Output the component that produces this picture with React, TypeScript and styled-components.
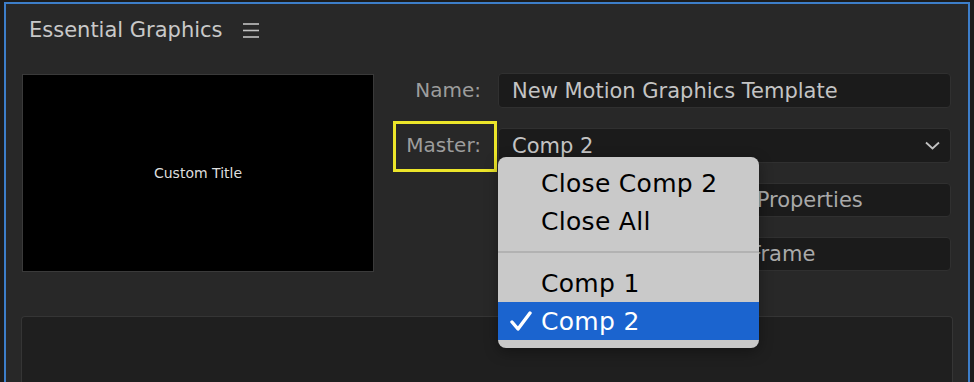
import React from 'react';
import styled, { createGlobalStyle } from 'styled-components';

const GlobalStyle = createGlobalStyle`
  html, body {
    margin: 0;
    padding: 0;
    background: #1c1c1c;
  }
  body {
    font-family: "DejaVu Sans", "Noto Sans", sans-serif;
  }
`;

const Frame = styled.div`
  width: 974px;
  height: 382px;
  box-sizing: border-box;
  padding: 2px 4px 0 4px;
  background: #1c1c1c;
  overflow: hidden;
  display: flex;
`;

const Panel = styled.div`
  flex: 1;
  display: flex;
  flex-direction: column;
  background: #282828;
  border: 2px solid #3d7ec9;
  border-bottom: none;
`;

const Header = styled.div`
  display: flex;
  align-items: center;
  gap: 20px;
  height: 26px;
  margin-top: 13px;
  padding-left: 23px;
`;

const Title = styled.span`
  font-size: 21px;
  line-height: 26px;
  color: #c9c9c9;
`;

const Body = styled.div`
  display: flex;
  align-items: flex-start;
  margin-top: 30px;
  padding: 0 17px 0 16px;
`;

const Preview = styled.div`
  width: 352px;
  height: 198px;
  box-sizing: border-box;
  margin-top: 1px;
  background: #000;
  border: 1px solid #3a3a3a;
  display: flex;
  align-items: center;
  justify-content: center;
  font-size: 14px;
  color: #dedede;
`;

const Form = styled.div`
  flex: 1;
  display: grid;
  grid-template-columns: 1fr 453px;
  column-gap: 17px;
  row-gap: 20px;
`;

const Label = styled.div`
  grid-column: 1;
  text-align: right;
  font-size: 20px;
  line-height: 35px;
  color: #9d9d9d;
`;

const Marked = styled.span`
  position: relative;
  display: inline-block;
  line-height: 35px;

  &::after {
    content: '';
    position: absolute;
    top: -7px;
    bottom: -9px;
    left: -13px;
    right: -16px;
    border: 3px solid #ece52a;
  }
`;

const Box = styled.div<{ $center?: boolean; $height?: number }>`
  grid-column: 2;
  position: relative;
  height: ${({ $height }) => $height ?? 35}px;
  box-sizing: border-box;
  display: flex;
  align-items: center;
  justify-content: ${({ $center }) => ($center ? 'center' : 'space-between')};
  padding: 0 10px 0 13px;
  background: #1b1b1b;
  border: 1px solid #303030;
  border-radius: 4px;
  font-size: 21px;
  color: ${({ $center }) => ($center ? '#a9a9a9' : '#c4c4c4')};
  white-space: nowrap;
`;

const Menu = styled.div`
  position: absolute;
  top: 28px;
  left: -1px;
  width: 261px;
  box-sizing: border-box;
  padding: 7px 0 8px;
  background: #c9c9c9;
  border-radius: 8px;
  box-shadow: 0 4px 14px rgba(0, 0, 0, 0.35);
  z-index: 10;
  overflow: hidden;
`;

const Item = styled.div<{ $active?: boolean }>`
  height: 38px;
  display: flex;
  align-items: center;
  padding-left: 43px;
  position: relative;
  font-size: 25px;
  letter-spacing: 0.3px;
  color: ${({ $active }) => ($active ? '#fff' : '#000')};
  background: ${({ $active }) => ($active ? '#1b64cf' : 'transparent')};
`;

const Check = styled.svg`
  position: absolute;
  left: 12px;
  top: 9px;
`;

const Separator = styled.div`
  height: 24px;
  display: flex;
  align-items: center;

  &::before {
    content: '';
    flex: 1;
    height: 2px;
    background: #b2b2b2;
  }
`;

const Lower = styled.div`
  flex: 1;
  margin: 44px 15px 0 15px;
  background: #1f1f1f;
  border: 1px solid #353535;
  border-bottom: none;
  border-radius: 4px 4px 0 0;
`;

const HamburgerIcon = () => (
  <svg width="16" height="15" viewBox="0 0 16 15">
    <g stroke="#c2c2c2" strokeWidth="1.6">
      <line x1="0" y1="1" x2="16" y2="1" />
      <line x1="0" y1="7.5" x2="16" y2="7.5" />
      <line x1="0" y1="14" x2="16" y2="14" />
    </g>
  </svg>
);

const Chevron = () => (
  <svg width="15" height="9" viewBox="0 0 15 9">
    <polyline points="1,1.5 7.5,7.5 14,1.5" fill="none" stroke="#c2c2c2" strokeWidth="1.8" />
  </svg>
);

export default function App() {
  return (
    <>
      <GlobalStyle />
      <Frame>
        <Panel>
          <Header>
            <Title>Essential Graphics</Title>
            <HamburgerIcon />
          </Header>
          <Body>
            <Preview>Custom Title</Preview>
            <Form>
              <Label>Name:</Label>
              <Box>New Motion Graphics Template</Box>
              <Label>
                <Marked>Master:</Marked>
              </Label>
              <Box>
                <span>Comp 2</span>
                <Chevron />
                <Menu>
                  <Item>Close Comp 2</Item>
                  <Item>Close All</Item>
                  <Separator />
                  <Item>Comp 1</Item>
                  <Item $active>
                    <Check width="22" height="20" viewBox="0 0 22 20">
                      <path d="M2 11 L8 18 L20 2" fill="none" stroke="#fff" strokeWidth="3.4" strokeLinecap="round" strokeLinejoin="round" />
                    </Check>
                    Comp 2
                  </Item>
                </Menu>
              </Box>
              <Box $center $height={34}>Solo Supported Properties</Box>
              <Box $center $height={34}>Set Poster Frame</Box>
            </Form>
          </Body>
          <Lower />
        </Panel>
      </Frame>
    </>
  );
}
